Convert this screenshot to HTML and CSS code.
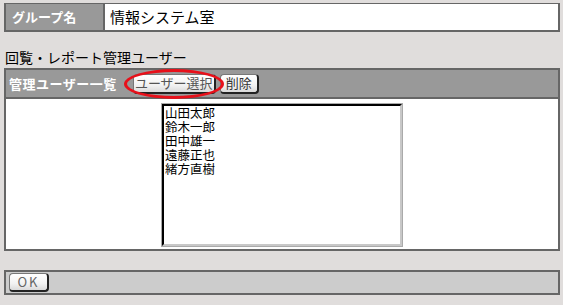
FILE: index.html
```html
<!DOCTYPE html>
<html lang="ja">
<head>
  <meta charset="UTF-8">
  <title>グループ設定</title>
  <link rel="stylesheet" href="styles.css">
</head>
<body>
  <div class="page">
    <div class="group-row">
      <div class="group-label">グループ名</div>
      <div class="group-value">情報システム室</div>
    </div>

    <div class="section-title">回覧・レポート管理ユーザー</div>

    <div class="list-head">
      <span class="list-head-title">管理ユーザー一覧</span>
      <span class="mark">
        <button class="btn btn-select">ユーザー選択</button>
      </span>
      <button class="btn">削除</button>
    </div>
    <div class="list-body">
      <div class="listbox">
        <div>山田太郎</div>
        <div>鈴木一郎</div>
        <div>田中雄一</div>
        <div>遠藤正也</div>
        <div>緒方直樹</div>
      </div>
    </div>

    <div class="footer-bar">
      <button class="btn btn-ok">OK</button>
    </div>
  </div>
</body>
</html>
```

FILE: styles.css
```css
body {
  margin: 0;
  background-color: #e0dddc;
  font-family: "Noto Sans CJK JP", "Liberation Sans", sans-serif;
}

.page {
  width: 556px;
  padding: 3px 0 0 4px;
}

.group-row {
  display: flex;
  height: 26px;
  border: 2px solid #666;
  border-top-width: 1px;
}

.group-label {
  width: 91px;
  padding-left: 6px;
  background: #999;
  color: #fff;
  font-weight: bold;
  font-size: 13px;
  line-height: 26px;
  border-right: 2px solid #666;
}

.group-value {
  flex: 1;
  background: #fff;
  padding-left: 5px;
  font-size: 15px;
  line-height: 26px;
}

.section-title {
  margin-top: 14px;
  padding-left: 1px;
  font-size: 14px;
  line-height: 22px;
  height: 22px;
}

.list-head {
  display: flex;
  align-items: center;
  height: 27px;
  background: #999;
  border: 2px solid #666;
  padding-left: 3px;
}

.list-head-title {
  color: #fff;
  font-weight: bold;
  font-size: 13px;
  letter-spacing: 0.5px;
  margin-right: 16px;
}

.mark {
  position: relative;
  display: flex;
  margin-right: 4px;
}

.mark::after {
  content: "";
  position: absolute;
  left: -9px;
  top: -5px;
  width: 94px;
  height: 24px;
  border: 3px solid #e8101a;
  border-radius: 50%;
}

.btn {
  font-family: "Noto Sans CJK JP", "Liberation Sans", sans-serif;
  font-size: 13px;
  line-height: 16px;
  height: 20px;
  padding: 0 5px;
  color: #333;
  background: linear-gradient(#fff, #f2f2f2 60%, #dadada);
  border: 1px solid #777;
  border-right: 2px solid #222;
  border-bottom: 2px solid #222;
  border-radius: 4px;
}

.btn-select {
  color: #555;
  width: 83px;
  padding: 0;
}

.list-body {
  height: 145px;
  background: #fff;
  border: 2px solid #666;
  border-top: none;
  display: flex;
  justify-content: center;
  padding-top: 5px;
}

.listbox {
  width: 234px;
  height: 138px;
  padding: 0 1px;
  background: #fff;
  color: #000;
  border: 2px solid #000;
  border-right-color: #c8c8c8;
  border-bottom-color: #c8c8c8;
  outline: 1px solid #aaa;
  font-size: 12.5px;
  line-height: 14px;
}

.footer-bar {
  display: flex;
  align-items: flex-start;
  margin-top: 19px;
  height: 20px;
  background: #ccc;
  border: 2px solid #666;
  padding: 1px 0 0 3px;
}

.btn-ok {
  width: 40px;
  height: 19px;
  color: #666;
  letter-spacing: 2px;
}
```
